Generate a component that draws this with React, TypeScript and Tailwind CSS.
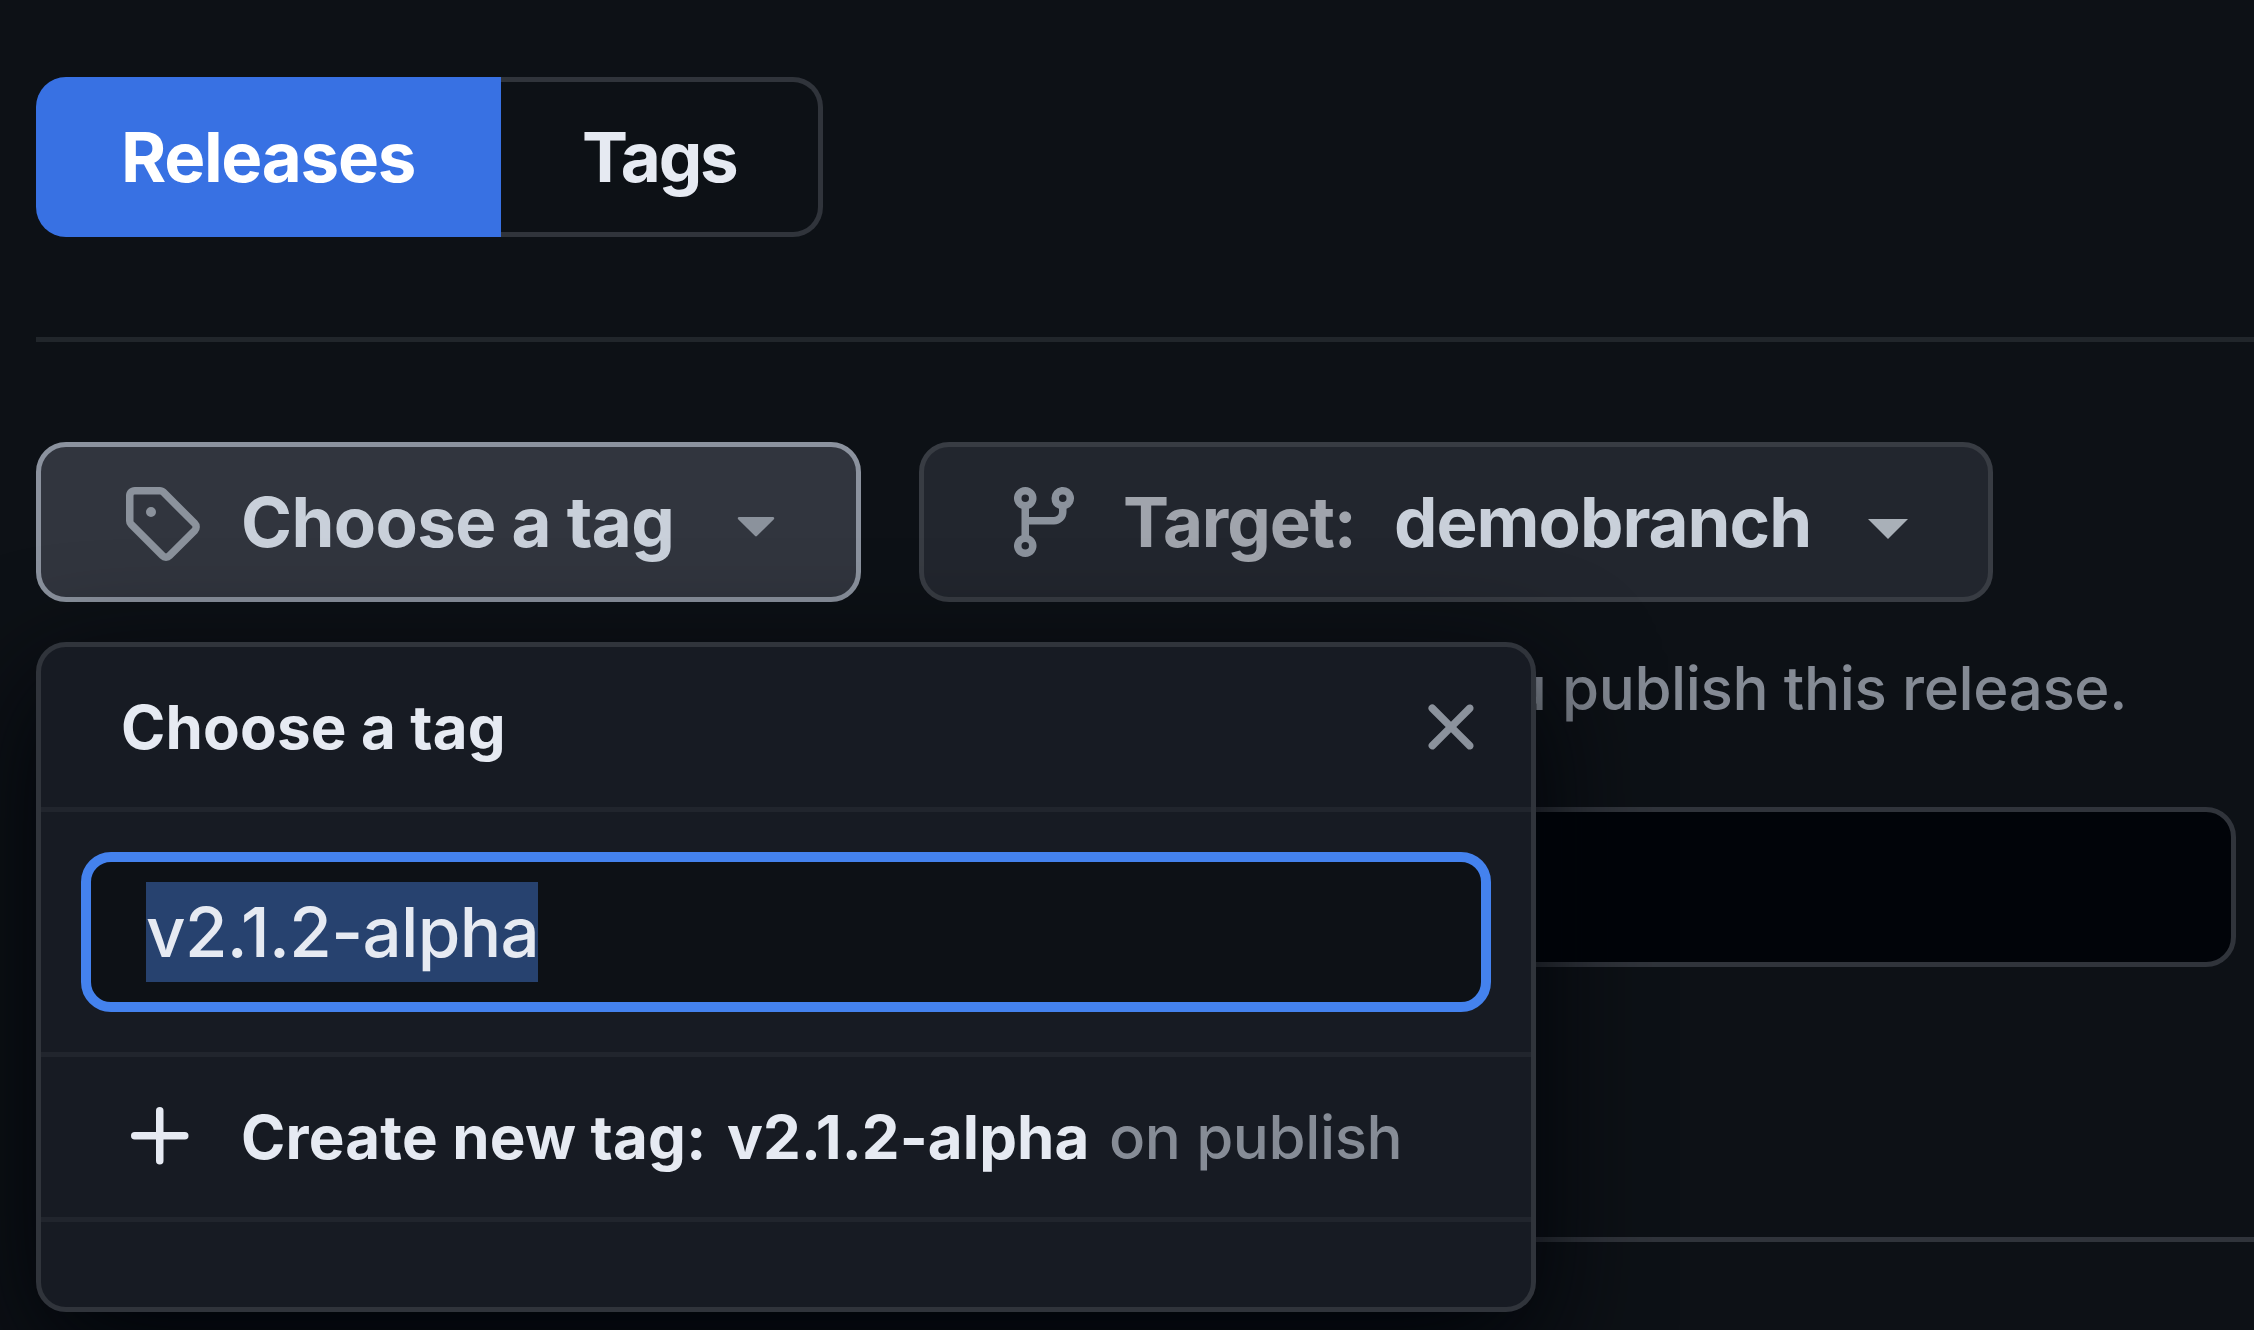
import type { ReactNode } from "react";

const Icon = ({ d, className }: { d: string; className: string }) => (
  <svg viewBox="0 0 16 16" className={`size-20 shrink-0 fill-current ${className}`} aria-hidden="true">
    <path fillRule="evenodd" d={d} />
  </svg>
);

const TAG =
  "M1 7.775V2.75C1 1.784 1.784 1 2.75 1h5.025c.464 0 .91.184 1.238.513l6.25 6.25a1.75 1.75 0 0 1 0 2.474l-5.026 5.026a1.75 1.75 0 0 1-2.474 0l-6.25-6.25A1.752 1.752 0 0 1 1 7.775Zm1.5 0c0 .066.026.13.073.177l6.25 6.25a.25.25 0 0 0 .354 0l5.025-5.025a.25.25 0 0 0 0-.354l-6.25-6.25a.25.25 0 0 0-.177-.073H2.75a.25.25 0 0 0-.25.25ZM6 5a1 1 0 1 1 0 2 1 1 0 0 1 0-2Z";
const BRANCH =
  "M9.5 3.25a2.25 2.25 0 1 1 3 2.122V6A2.5 2.5 0 0 1 10 8.5H5v2.128a2.251 2.251 0 1 1-1.5 0V5.372a2.25 2.25 0 1 1 1.5 0V7h5a1 1 0 0 0 1-1v-.628A2.25 2.25 0 0 1 9.5 3.25Zm-6 0a.75.75 0 1 0 1.5 0 .75.75 0 0 0-1.5 0Zm8.25-.75a.75.75 0 1 0 0 1.5.75.75 0 0 0 0-1.5ZM4.25 12a.75.75 0 1 0 0 1.5.75.75 0 0 0 0-1.5Z";
const CARET =
  "m4.427 7.427 3.396 3.396a.25.25 0 0 0 .354 0l3.396-3.396A.25.25 0 0 0 11.396 7H4.604a.25.25 0 0 0-.177.427Z";
const CLOSE =
  "M3.72 3.72a.75.75 0 0 1 1.06 0L8 6.94l3.22-3.22a.749.749 0 0 1 1.275.326.749.749 0 0 1-.215.734L9.06 8l3.22 3.22a.749.749 0 0 1-.326 1.275.749.749 0 0 1-.734-.215L8 9.06l-3.22 3.22a.751.751 0 0 1-1.042-.018.751.751 0 0 1-.018-1.042L6.94 8 3.72 4.78a.75.75 0 0 1 0-1.06Z";
const PLUS =
  "M7.75 2a.75.75 0 0 1 .75.75V7h4.25a.75.75 0 0 1 0 1.5H8.5v4.25a.75.75 0 0 1-1.5 0V8.5H2.75a.75.75 0 0 1 0-1.5H7V2.75A.75.75 0 0 1 7.75 2Z";

const Row = ({ className, children }: { className: string; children?: ReactNode }) => (
  <div className={`flex items-center ${className}`}>{children}</div>
);

function TagMenu() {
  return (
    <div className="absolute top-[200px] left-0 z-10 flex h-[670px] w-[1500px] flex-col rounded-[30px] border-[5px] border-[#30343b] bg-[#171b23] text-[60px] text-[#e6eaf2] shadow-[0_40px_120px_#010409]">
      <Row className="h-[165px] justify-between border-b-[5px] border-[#21252d] pr-10 pl-20">
        <span className="font-[650] tracking-[0.15px]">Choose a tag</span>
        <Icon d={CLOSE} className="text-[#8b929c]" />
      </Row>
      <Row className="h-[245px] border-b-[5px] border-[#21252d] px-10">
        <Row className="h-[160px] grow rounded-[30px] border-[10px] border-[#4482ee] bg-[#0d1116] pl-[55px] text-[69px]">
          <span className="flex h-[100px] w-[392px] items-center bg-[#27426f] tracking-[-0.65px]">v2.1.2-alpha</span>
        </Row>
      </Row>
      <Row className="h-[165px] border-b-[5px] border-[#21252d] pl-20">
        <Icon d={PLUS} className="" />
        <span className="ml-10 w-[486px] font-[650] tracking-[0.2px]">Create new tag:</span>
        <span className="w-[382px] font-[650] tracking-[0.1px]">v2.1.2-alpha</span>
        <span className="tracking-[-0.4px] text-[#868c96]">on publish</span>
      </Row>
    </div>
  );
}

export default function App() {
  return (
    <div className="flex h-[1330px] w-[2254px] flex-col overflow-hidden bg-[#0d1116] pt-[77px] pl-9 font-['Inter',sans-serif] font-[450] leading-none whitespace-nowrap">
      <nav className="flex h-[160px] text-[69px] font-[650]">
        <Row className="w-[465px] rounded-l-[30px] bg-[#3871e3] pl-[85px] tracking-[-1.3px] text-white">Releases</Row>
        <Row className="w-[322px] rounded-r-[30px] border-[5px] border-l-0 border-[#30343b] pl-[81px] tracking-[-2.2px] text-[#e6eaf2]">
          Tags
        </Row>
      </nav>

      <div className="mt-[100px] h-[5px] shrink-0 bg-[#21262b]" />

      <div className="mt-[100px] flex h-[160px] shrink-0 gap-[58px] text-[69px] text-[#c9d0da]">
        <div className="relative">
          <Row className="h-[160px] w-[825px] rounded-[30px] border-[5px] border-[#8b929e] bg-[#31353e] pl-20 font-[650]">
            <Icon d={TAG} className="text-[#8b929c]" />
            <span className="ml-10 w-[475px] tracking-[-0.6px]">Choose a tag</span>
            <Icon d={CARET} className="text-[#8b929c]" />
          </Row>
          <TagMenu />
        </div>
        <Row className="w-[1074px] rounded-[30px] border-[5px] border-[#383c43] bg-[#22262e] pl-20 font-[650]">
          <Icon d={BRANCH} className="text-[#8b929c]" />
          <span className="ml-[39px] w-[271px] tracking-[-1.1px] text-[#a0a4ac]">Target:</span>
          <span className="w-[474px] tracking-[-1px]">demobranch</span>
          <span className="mt-[14px] size-0 border-x-[20px] border-t-[20px] border-x-transparent border-t-[#a9b0b8]" />
        </Row>
      </div>

      <Row className="mt-[50px] h-[71px] w-[2091px] shrink-0 justify-end text-[60px] tracking-[-0.38px] text-[#848a94]">
        when you publish this release.
      </Row>

      <div className="mt-[84px] h-[160px] w-[2200px] shrink-0 rounded-[30px] border-[5px] border-[#30343b] bg-[#010409]" />

      <div className="mt-[270px] h-[5px] shrink-0 bg-[#30343b]" />
    </div>
  );
}
